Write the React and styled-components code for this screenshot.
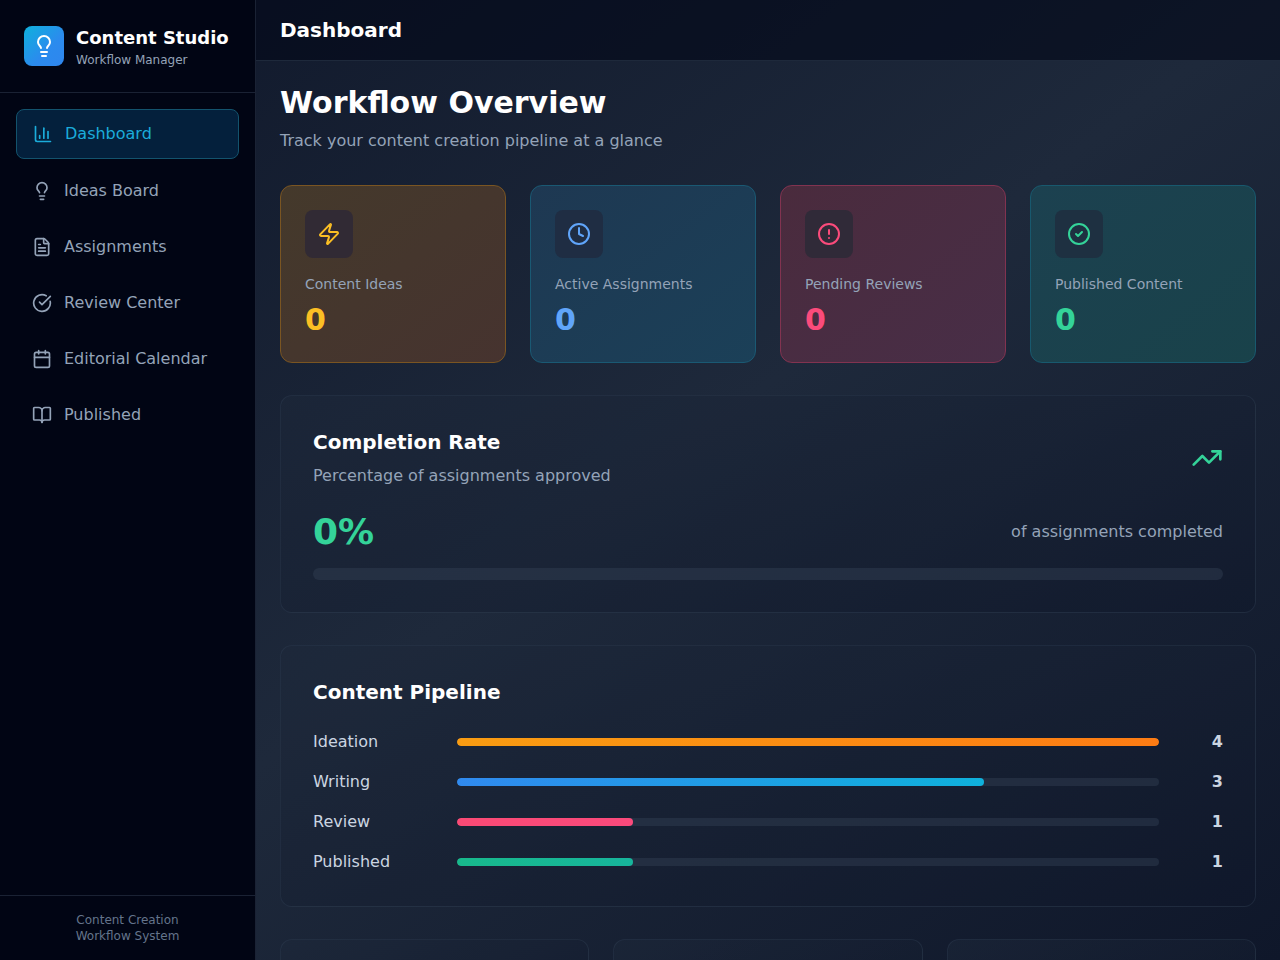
import React from 'react';
import styled, { createGlobalStyle } from 'styled-components';
import {
  BookOpen,
  Calendar,
  ChartColumn,
  CircleAlert,
  CircleCheck,
  CircleCheckBig,
  Clock,
  FileText,
  Lightbulb,
  TrendingUp,
  Zap,
} from 'lucide-react';

const GlobalStyle = createGlobalStyle`
  *, *:before, *:after {
    box-sizing: border-box;
  }

  body {
    margin: 0;
    font-family: "DejaVu Sans", sans-serif;
    font-size: 16px;
    line-height: 24px;
    color: #fff;
    background: #0f172a;
  }

  h1, h2, h3, p {
    margin: 0;
  }
`;

const Layout = styled.div`
  display: flex;
  height: 100vh;
  overflow: hidden;
  background: linear-gradient(to bottom right, #0f172a, #1e293b, #0f172a);
`;

const Sidebar = styled.aside`
  display: flex;
  flex-direction: column;
  flex: none;
  width: 256px;
  background: #010514;
  border-right: 1px solid #1a2234;
`;

const Brand = styled.div`
  display: flex;
  align-items: center;
  gap: 12px;
  padding: 24px;
  border-bottom: 1px solid #1a2234;
`;

const Logo = styled.div`
  display: flex;
  align-items: center;
  justify-content: center;
  width: 40px;
  height: 40px;
  border-radius: 8px;
  background: linear-gradient(to bottom right, #0fb1dc, #2b8bee 60%, #2f86ee);
`;

const BrandName = styled.h1`
  font-size: 18px;
  line-height: 28px;
  font-weight: 700;
  white-space: nowrap;
`;

const BrandNote = styled.p`
  font-size: 12px;
  line-height: 16px;
  color: #94a3b8;
`;

const Nav = styled.nav`
  display: flex;
  flex-direction: column;
  flex: 1;
  gap: 8px;
  padding: 16px;
`;

const NavItem = styled.a`
  display: flex;
  align-items: center;
  gap: 12px;
  padding: 12px 16px;
  border-radius: 8px;
  cursor: pointer;
  color: ${prop => (prop.$active ? '#1bacda' : '#94a3b8')};
  background: ${prop => (prop.$active ? '#04203c' : 'transparent')};
  border: ${prop => (prop.$active ? '1px solid #13536d' : '0')};
`;

const SidebarFooter = styled.div`
  padding: 16px;
  border-top: 1px solid #1a2234;
  font-size: 12px;
  line-height: 16px;
  text-align: center;
  color: #64748b;
`;

const Main = styled.main`
  display: flex;
  flex-direction: column;
  flex: 1;
  min-width: 0;
`;

const Topbar = styled.header`
  flex: none;
  padding: 16px 24px;
  background: rgba(2, 6, 23, 0.6);
  border-bottom: 1px solid #1e293b;
`;

const TopbarTitle = styled.h2`
  font-size: 20px;
  line-height: 28px;
  font-weight: 600;
`;

const Content = styled.div`
  display: flex;
  flex-direction: column;
  flex: 1;
  gap: 32px;
  min-height: 0;
  padding: 24px;
  overflow: hidden;

  > * {
    flex: none;
  }
`;

const PageTitle = styled.h2`
  margin-bottom: 8px;
  font-size: 30px;
  line-height: 36px;
  font-weight: 700;
`;

const Muted = styled.p`
  color: #94a3b8;
`;

const Stats = styled.div`
  display: grid;
  grid-template-columns: repeat(4, 1fr);
  gap: 24px;
`;

const StatCard = styled.div`
  padding: 24px;
  border-radius: 12px;
  border: 1px solid ${prop => prop.$border};
  background: linear-gradient(to bottom right, ${prop => prop.$from}, ${prop => prop.$to});
  background-origin: border-box;

  svg {
    color: ${prop => prop.$accent};
  }
`;

const StatIcon = styled.div`
  display: flex;
  align-items: center;
  justify-content: center;
  width: 48px;
  height: 48px;
  margin-bottom: 16px;
  border-radius: 8px;
  background: ${prop => prop.$fill};
`;

const StatLabel = styled.p`
  margin-bottom: 8px;
  font-size: 14px;
  line-height: 20px;
  color: #94a3b8;
`;

const StatValue = styled.p`
  font-size: 30px;
  line-height: 36px;
  font-weight: 700;
  color: ${prop => prop.$accent};
`;

const Panel = styled.section`
  padding: 32px;
  border: 1px solid rgba(51, 65, 85, 0.4);
  border-radius: 12px;
  background: linear-gradient(to bottom right, rgba(30, 41, 59, 0.5), rgba(15, 23, 42, 0.5));
`;

const PanelHeader = styled.div`
  display: flex;
  align-items: center;
  justify-content: space-between;
  margin-bottom: 24px;

  svg {
    color: #34d399;
  }
`;

const PanelTitle = styled.h3`
  font-size: 20px;
  line-height: 28px;
  font-weight: 600;
`;

const PanelNote = styled(Muted)`
  margin-top: 8px;
`;

const Rate = styled.div`
  display: flex;
  align-items: center;
  justify-content: space-between;
  margin-bottom: 16px;
`;

const RateValue = styled.span`
  font-size: 36px;
  line-height: 40px;
  font-weight: 700;
  color: #34d399;
`;

const Track = styled.div`
  flex: 1;
  height: ${prop => prop.$size}px;
  overflow: hidden;
  border-radius: 999px;
  background: rgba(51, 65, 85, 0.45);
`;

const Fill = styled.div`
  height: 100%;
  border-radius: 999px;
  background: linear-gradient(to right, ${prop => prop.$from}, ${prop => prop.$to});
`;

const Stages = styled.div`
  display: flex;
  flex-direction: column;
  gap: 16px;
`;

const Stage = styled.div`
  display: flex;
  align-items: center;
  gap: 16px;
`;

const StageName = styled.span`
  width: 128px;
  color: #cbd5e1;
`;

const StageCount = styled.span`
  width: 48px;
  text-align: right;
  font-weight: 600;
  color: #cbd5e1;
`;

const Summary = styled.div`
  display: grid;
  grid-template-columns: repeat(3, 1fr);
  gap: 24px;
`;

const SummaryCard = styled(Panel)`
  height: 160px;
`;

const navItems = [
  { label: 'Dashboard', icon: ChartColumn },
  { label: 'Ideas Board', icon: Lightbulb },
  { label: 'Assignments', icon: FileText },
  { label: 'Review Center', icon: CircleCheckBig },
  { label: 'Editorial Calendar', icon: Calendar },
  { label: 'Published', icon: BookOpen },
];

const stats = [
  {
    label: 'Content Ideas',
    value: 0,
    icon: Zap,
    accent: '#fbbf24',
    from: '#44392b',
    to: '#46332f',
    border: '#7a5522',
    fill: '#312a34',
  },
  {
    label: 'Active Assignments',
    value: 0,
    icon: Clock,
    accent: '#60a5fa',
    from: '#1e3852',
    to: '#1b4058',
    border: '#1a5973',
    fill: '#1f2d43',
  },
  {
    label: 'Pending Reviews',
    value: 0,
    icon: CircleAlert,
    accent: '#fb4b7b',
    from: '#4a2b3d',
    to: '#482e47',
    border: '#823350',
    fill: '#302a38',
  },
  {
    label: 'Published Content',
    value: 0,
    icon: CircleCheck,
    accent: '#34d399',
    from: '#1c4150',
    to: '#19424a',
    border: '#18596e',
    fill: '#1e3041',
  },
];

const stages = [
  { name: 'Ideation', count: 4, from: '#f99c12', to: '#fd7c14' },
  { name: 'Writing', count: 3, from: '#308aef', to: '#0fb1dc' },
  { name: 'Review', count: 1, from: '#fa4a75', to: '#fa4a7c' },
  { name: 'Published', count: 1, from: '#18b98c', to: '#17b59c' },
];

const maxCount = Math.max(...stages.map(stage => stage.count));
const width = count => `${Math.round((count / maxCount) * 100)}%`;

function Menu() {
  return (
    <Sidebar>
      <Brand>
        <Logo>
          <Lightbulb size={24} />
        </Logo>
        <div>
          <BrandName>Content Studio</BrandName>
          <BrandNote>Workflow Manager</BrandNote>
        </div>
      </Brand>
      <Nav>
        {navItems.map(({ label, icon: Icon }, i) => (
          <NavItem key={label} $active={i === 0}>
            <Icon size={20} />
            {label}
          </NavItem>
        ))}
      </Nav>
      <SidebarFooter>
        <p>Content Creation</p>
        <p>Workflow System</p>
      </SidebarFooter>
    </Sidebar>
  );
}

function Stat(props) {
  const { label, value, icon: Icon, accent, from, to, border, fill } = props;
  return (
    <StatCard $accent={accent} $from={from} $to={to} $border={border}>
      <StatIcon $fill={fill}>
        <Icon size={24} />
      </StatIcon>
      <StatLabel>{label}</StatLabel>
      <StatValue $accent={accent}>{value}</StatValue>
    </StatCard>
  );
}

function App() {
  return (
    <Layout>
      <GlobalStyle />
      <Menu />
      <Main>
        <Topbar>
          <TopbarTitle>Dashboard</TopbarTitle>
        </Topbar>
        <Content>
          <div>
            <PageTitle>Workflow Overview</PageTitle>
            <Muted>Track your content creation pipeline at a glance</Muted>
          </div>
          <Stats>
            {stats.map(stat => (
              <Stat key={stat.label} {...stat} />
            ))}
          </Stats>
          <Panel>
            <PanelHeader>
              <div>
                <PanelTitle>Completion Rate</PanelTitle>
                <PanelNote>Percentage of assignments approved</PanelNote>
              </div>
              <TrendingUp size={32} />
            </PanelHeader>
            <Rate>
              <RateValue>0%</RateValue>
              <Muted as="span">of assignments completed</Muted>
            </Rate>
            <Track $size={12} />
          </Panel>
          <Panel>
            <PanelHeader>
              <PanelTitle>Content Pipeline</PanelTitle>
            </PanelHeader>
            <Stages>
              {stages.map(({ name, count, from, to }) => (
                <Stage key={name}>
                  <StageName>{name}</StageName>
                  <Track $size={8}>
                    <Fill $from={from} $to={to} style={{ width: width(count) }} />
                  </Track>
                  <StageCount>{count}</StageCount>
                </Stage>
              ))}
            </Stages>
          </Panel>
          <Summary>
            <SummaryCard />
            <SummaryCard />
            <SummaryCard />
          </Summary>
        </Content>
      </Main>
    </Layout>
  );
}

export default App;
